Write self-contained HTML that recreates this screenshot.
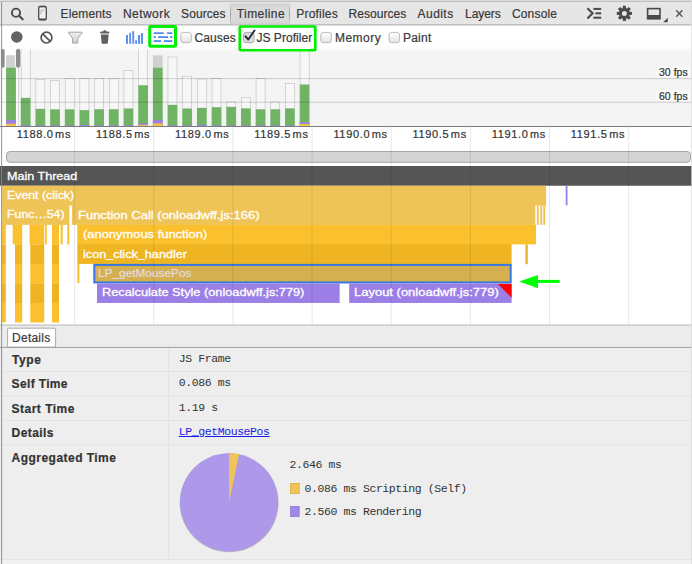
<!DOCTYPE html>
<html><head><meta charset="utf-8"><title>DevTools Timeline</title>
<style>
html,body{margin:0;padding:0;}
body{width:692px;height:564px;position:relative;overflow:hidden;background:#fff;font-family:'Liberation Sans', sans-serif;}
.t{position:absolute;white-space:pre;line-height:1;}
.b{position:absolute;}
svg{position:absolute;left:0;top:0;}
</style></head><body>
<svg width="692" height="564" viewBox="0 0 692 564">
<rect x="0.00" y="0.00" width="692.00" height="1.30" fill="#dadada" />
<rect x="0.00" y="1.30" width="692.00" height="0.80" fill="#a6a6a6" />
<rect x="0.00" y="2.10" width="692.00" height="22.20" fill="#e6e6e6" />
<rect x="0.00" y="24.30" width="692.00" height="1.10" fill="#a9a9a9" />
<defs><linearGradient id="tabg" x1="0" y1="0" x2="0" y2="1"><stop offset="0" stop-color="#d0d0d0"/><stop offset="0.2" stop-color="#dadada"/><stop offset="0.8" stop-color="#dadada"/><stop offset="1" stop-color="#d2d2d2"/></linearGradient><linearGradient id="tabb" x1="0" y1="0" x2="0" y2="1"><stop offset="0" stop-color="#a0a0a0" stop-opacity="0.1"/><stop offset="0.5" stop-color="#9a9a9a"/><stop offset="1" stop-color="#a0a0a0" stop-opacity="0.1"/></linearGradient><linearGradient id="ovg" x1="0" y1="0" x2="0" y2="1"><stop offset="0" stop-color="#ffffff"/><stop offset="1" stop-color="#f4f4f4"/></linearGradient></defs>
<rect x="230.30" y="3.50" width="59.30" height="20.80" fill="url(#tabg)" />
<rect x="230.00" y="3.50" width="1.00" height="20.80" fill="url(#tabb)" />
<rect x="289.00" y="3.50" width="1.00" height="20.80" fill="url(#tabb)" />
<rect x="0.00" y="49.00" width="692.00" height="77.00" fill="#f4f4f4" />
<rect x="0.00" y="46.00" width="692.00" height="6.00" fill="url(#ovg)" />
<rect x="2.00" y="46.00" width="16.50" height="80.00" fill="#ffffff" />
<clipPath id="ovc"><rect x="0" y="49" width="692" height="77"/></clipPath><g clip-path="url(#ovc)">
<rect x="6.10" y="55.30" width="9.80" height="12.30" fill="#d0d0d0" />
<rect x="6.10" y="67.60" width="9.80" height="58.40" fill="#70b365" />
<rect x="6.10" y="120.20" width="9.80" height="5.80" fill="#9b7fe6" />
<rect x="6.10" y="123.70" width="9.80" height="2.30" fill="#f3c144" />
<rect x="21.18" y="44.00" width="9.00" height="54.00" fill="#ffffff" fill-opacity="0.28" stroke="#b4b4b4" stroke-width="0.5"/>
<rect x="20.78" y="98.00" width="9.80" height="28.00" fill="#70b365" />
<rect x="20.78" y="125.20" width="9.80" height="0.80" fill="#9b7fe6" />
<rect x="35.86" y="79.30" width="9.00" height="29.70" fill="#ffffff" fill-opacity="0.28" stroke="#b4b4b4" stroke-width="0.5"/>
<rect x="35.46" y="109.00" width="9.80" height="17.00" fill="#70b365" />
<rect x="35.46" y="125.40" width="9.80" height="0.60" fill="#9b7fe6" />
<rect x="50.54" y="80.70" width="9.00" height="28.80" fill="#ffffff" fill-opacity="0.28" stroke="#b4b4b4" stroke-width="0.5"/>
<rect x="50.14" y="109.50" width="9.80" height="16.50" fill="#70b365" />
<rect x="50.14" y="125.40" width="9.80" height="0.60" fill="#9b7fe6" />
<rect x="65.22" y="78.30" width="9.00" height="31.20" fill="#ffffff" fill-opacity="0.28" stroke="#b4b4b4" stroke-width="0.5"/>
<rect x="64.82" y="109.50" width="9.80" height="16.50" fill="#70b365" />
<rect x="64.82" y="125.40" width="9.80" height="0.60" fill="#9b7fe6" />
<rect x="79.90" y="78.30" width="9.00" height="31.90" fill="#ffffff" fill-opacity="0.28" stroke="#b4b4b4" stroke-width="0.5"/>
<rect x="79.50" y="110.20" width="9.80" height="15.80" fill="#70b365" />
<rect x="79.50" y="125.00" width="9.80" height="1.00" fill="#9b7fe6" />
<rect x="94.58" y="78.30" width="9.00" height="31.00" fill="#ffffff" fill-opacity="0.28" stroke="#b4b4b4" stroke-width="0.5"/>
<rect x="94.18" y="109.30" width="9.80" height="16.70" fill="#70b365" />
<rect x="94.18" y="125.40" width="9.80" height="0.60" fill="#9b7fe6" />
<rect x="109.26" y="78.30" width="9.00" height="31.00" fill="#ffffff" fill-opacity="0.28" stroke="#b4b4b4" stroke-width="0.5"/>
<rect x="108.86" y="109.30" width="9.80" height="16.70" fill="#70b365" />
<rect x="108.86" y="125.40" width="9.80" height="0.60" fill="#9b7fe6" />
<rect x="123.94" y="70.60" width="9.00" height="38.10" fill="#ffffff" fill-opacity="0.28" stroke="#b4b4b4" stroke-width="0.5"/>
<rect x="123.54" y="108.70" width="9.80" height="17.30" fill="#70b365" />
<rect x="123.54" y="125.40" width="9.80" height="0.60" fill="#9b7fe6" />
<rect x="138.62" y="44.00" width="9.00" height="41.40" fill="#ffffff" fill-opacity="0.28" stroke="#b4b4b4" stroke-width="0.5"/>
<rect x="138.22" y="85.40" width="9.80" height="40.60" fill="#70b365" />
<rect x="138.22" y="123.40" width="9.80" height="2.60" fill="#9b7fe6" />
<rect x="138.22" y="124.80" width="9.80" height="1.20" fill="#f3c144" />
<rect x="152.90" y="55.30" width="9.80" height="12.30" fill="#d0d0d0" />
<rect x="152.90" y="67.60" width="9.80" height="58.40" fill="#70b365" />
<rect x="152.90" y="119.80" width="9.80" height="6.20" fill="#9b7fe6" />
<rect x="152.90" y="123.30" width="9.80" height="2.70" fill="#f3c144" />
<rect x="167.98" y="57.00" width="9.00" height="48.00" fill="#ffffff" fill-opacity="0.28" stroke="#b4b4b4" stroke-width="0.5"/>
<rect x="167.58" y="105.00" width="9.80" height="21.00" fill="#70b365" />
<rect x="167.58" y="125.40" width="9.80" height="0.60" fill="#9b7fe6" />
<rect x="182.66" y="76.20" width="9.00" height="32.50" fill="#ffffff" fill-opacity="0.28" stroke="#b4b4b4" stroke-width="0.5"/>
<rect x="182.26" y="108.70" width="9.80" height="17.30" fill="#70b365" />
<rect x="182.26" y="125.40" width="9.80" height="0.60" fill="#9b7fe6" />
<rect x="197.34" y="79.00" width="9.00" height="29.00" fill="#ffffff" fill-opacity="0.28" stroke="#b4b4b4" stroke-width="0.5"/>
<rect x="196.94" y="108.00" width="9.80" height="18.00" fill="#70b365" />
<rect x="196.94" y="124.80" width="9.80" height="1.20" fill="#9b7fe6" />
<rect x="212.02" y="78.40" width="9.00" height="28.90" fill="#ffffff" fill-opacity="0.28" stroke="#b4b4b4" stroke-width="0.5"/>
<rect x="211.62" y="107.30" width="9.80" height="18.70" fill="#70b365" />
<rect x="211.62" y="125.40" width="9.80" height="0.60" fill="#9b7fe6" />
<rect x="226.70" y="102.00" width="9.00" height="5.00" fill="#ffffff" fill-opacity="0.28" stroke="#b4b4b4" stroke-width="0.5"/>
<rect x="226.30" y="107.00" width="9.80" height="19.00" fill="#70b365" />
<rect x="226.30" y="125.40" width="9.80" height="0.60" fill="#9b7fe6" />
<rect x="241.38" y="97.80" width="9.00" height="10.70" fill="#ffffff" fill-opacity="0.28" stroke="#b4b4b4" stroke-width="0.5"/>
<rect x="240.98" y="108.50" width="9.80" height="17.50" fill="#70b365" />
<rect x="240.98" y="125.40" width="9.80" height="0.60" fill="#9b7fe6" />
<rect x="256.06" y="78.40" width="9.00" height="31.00" fill="#ffffff" fill-opacity="0.28" stroke="#b4b4b4" stroke-width="0.5"/>
<rect x="255.66" y="109.40" width="9.80" height="16.60" fill="#70b365" />
<rect x="255.66" y="125.40" width="9.80" height="0.60" fill="#9b7fe6" />
<rect x="270.74" y="102.00" width="9.00" height="7.40" fill="#ffffff" fill-opacity="0.28" stroke="#b4b4b4" stroke-width="0.5"/>
<rect x="270.34" y="109.40" width="9.80" height="16.60" fill="#70b365" />
<rect x="270.34" y="125.40" width="9.80" height="0.60" fill="#9b7fe6" />
<rect x="285.42" y="83.40" width="9.00" height="25.10" fill="#ffffff" fill-opacity="0.28" stroke="#b4b4b4" stroke-width="0.5"/>
<rect x="285.02" y="108.50" width="9.80" height="17.50" fill="#70b365" />
<rect x="285.02" y="125.40" width="9.80" height="0.60" fill="#9b7fe6" />
<rect x="300.10" y="44.00" width="9.00" height="40.80" fill="#ffffff" fill-opacity="0.28" stroke="#b4b4b4" stroke-width="0.5"/>
<rect x="299.70" y="84.00" width="9.80" height="0.80" fill="#d0d0d0" />
<rect x="299.70" y="84.80" width="9.80" height="41.20" fill="#70b365" />
<rect x="299.70" y="122.40" width="9.80" height="3.60" fill="#9b7fe6" />
<rect x="299.70" y="124.00" width="9.80" height="2.00" fill="#f3c144" />
</g>
<rect x="2.00" y="78.10" width="690.00" height="1.00" fill="#000" fill-opacity="0.17"/>
<rect x="2.00" y="101.70" width="690.00" height="1.00" fill="#000" fill-opacity="0.17"/>
<rect x="655.50" y="66.50" width="34.50" height="11.20" fill="#fff" fill-opacity="0.55"/>
<rect x="655.50" y="90.50" width="34.50" height="10.80" fill="#fff" fill-opacity="0.55"/>
<rect x="1.2" y="48.9" width="3.4" height="18.8" rx="1.6" fill="#8c8c8c"/>
<rect x="15.4" y="48.4" width="5.6" height="19.8" rx="2.7" fill="#8c8c8c" stroke="#fff" stroke-width="1.0"/>
<rect x="17.90" y="67.00" width="0.80" height="59.00" fill="#c8c8c8" />
<rect x="0.00" y="126.00" width="692.00" height="1.00" fill="#7d7d7d" />
<rect x="6.5" y="151.5" width="684" height="10.8" rx="3.6" fill="#d4d4d4" stroke="#a6a6a6" stroke-width="1"/>
<rect x="0.00" y="166.00" width="692.00" height="19.75" fill="#555555" />
<rect x="2.10" y="204.80" width="67.20" height="1.30" fill="#efc457" />
<rect x="72.00" y="204.80" width="463.30" height="1.30" fill="#efc457" />
<rect x="77.30" y="224.35" width="458.00" height="1.30" fill="#efc457" />
<rect x="77.30" y="243.90" width="434.30" height="1.30" fill="#fbc02d" />
<rect x="94.00" y="263.40" width="417.60" height="1.30" fill="#eeb422" />
<rect x="2.10" y="224.35" width="3.70" height="1.30" fill="#efc457" />
<rect x="12.70" y="224.35" width="9.50" height="1.30" fill="#efc457" />
<rect x="29.50" y="224.35" width="14.70" height="1.30" fill="#efc457" />
<rect x="45.10" y="224.35" width="1.70" height="1.30" fill="#efc457" />
<rect x="52.00" y="224.35" width="7.00" height="1.30" fill="#efc457" />
<rect x="60.60" y="224.35" width="2.10" height="1.30" fill="#efc457" />
<rect x="67.30" y="224.35" width="2.00" height="1.30" fill="#efc457" />
<rect x="2.10" y="185.75" width="544.00" height="19.75" fill="#efc457" />
<rect x="2.10" y="205.30" width="67.20" height="19.55" fill="#efc457" />
<rect x="72.00" y="205.30" width="463.30" height="19.55" fill="#efc457" />
<rect x="536.90" y="205.30" width="1.80" height="19.55" fill="#efc457" />
<rect x="540.30" y="205.30" width="1.90" height="19.55" fill="#efc457" />
<rect x="543.30" y="205.30" width="1.90" height="19.55" fill="#efc457" />
<rect x="2.10" y="224.85" width="3.70" height="19.55" fill="#fbc02d" />
<rect x="12.70" y="224.85" width="9.50" height="19.55" fill="#fbc02d" />
<rect x="29.50" y="224.85" width="14.70" height="19.55" fill="#fbc02d" />
<rect x="45.10" y="224.85" width="1.70" height="19.55" fill="#fbc02d" />
<rect x="52.00" y="224.85" width="7.00" height="19.55" fill="#fbc02d" />
<rect x="60.60" y="224.85" width="2.10" height="19.55" fill="#fbc02d" />
<rect x="67.30" y="224.85" width="2.00" height="19.55" fill="#fbc02d" />
<rect x="77.30" y="224.85" width="458.70" height="19.55" fill="#fbc02d" />
<rect x="2.10" y="244.40" width="3.70" height="19.70" fill="#eeb422" />
<rect x="15.00" y="244.40" width="7.20" height="19.70" fill="#eeb422" />
<rect x="30.30" y="244.40" width="13.90" height="19.70" fill="#eeb422" />
<rect x="52.00" y="244.40" width="7.00" height="19.70" fill="#eeb422" />
<rect x="2.10" y="263.90" width="3.70" height="19.75" fill="#fbc02d" />
<rect x="15.00" y="263.90" width="7.20" height="19.75" fill="#fbc02d" />
<rect x="30.30" y="263.90" width="13.90" height="19.75" fill="#fbc02d" />
<rect x="52.00" y="263.90" width="7.00" height="19.75" fill="#fbc02d" />
<rect x="2.10" y="283.45" width="3.70" height="19.75" fill="#eeb422" />
<rect x="15.00" y="283.45" width="7.20" height="19.75" fill="#eeb422" />
<rect x="30.30" y="283.45" width="13.90" height="19.75" fill="#eeb422" />
<rect x="52.00" y="283.45" width="7.00" height="19.75" fill="#eeb422" />
<rect x="2.10" y="303.00" width="3.70" height="19.45" fill="#fbc02d" />
<rect x="15.00" y="303.00" width="7.20" height="19.45" fill="#fbc02d" />
<rect x="30.30" y="303.00" width="13.90" height="19.45" fill="#fbc02d" />
<rect x="52.00" y="303.00" width="7.00" height="19.45" fill="#fbc02d" />
<rect x="77.30" y="244.40" width="434.30" height="19.50" fill="#eeb422" />
<rect x="525.40" y="244.40" width="2.40" height="19.80" fill="#ecb030" />
<rect x="77.30" y="263.90" width="2.10" height="19.15" fill="#fbc02d" />
<rect x="94.3" y="264.9" width="416.40" height="17.55" fill="#d4b050" stroke="#3478e0" stroke-width="2"/>
<rect x="97.00" y="283.45" width="242.65" height="19.50" fill="#9b7fe6" />
<rect x="349.20" y="283.45" width="162.40" height="19.50" fill="#9b7fe6" />
<polygon points="497.9,283.9 511.6,283.9 511.6,297.7" fill="#ff0000"/>
<rect x="565.70" y="185.75" width="1.80" height="19.55" fill="#9b7fe6" />
<rect x="0.00" y="324.60" width="692.00" height="1.10" fill="#adadad" />
<rect x="0.00" y="325.70" width="692.00" height="21.30" fill="#ececec" />
<rect x="0.00" y="347.90" width="692.00" height="216.10" fill="#eeeeee" />
<rect x="0.00" y="560.00" width="692.00" height="4.00" fill="#f1f1f1" />
<path d="M7.6,347.2 L7.6,329.1 Q7.6,328.2 8.5,328.2 L54.7,328.2 Q55.6,328.2 55.6,329.1 L55.6,347.2 Z" fill="#ffffff" stroke="#a2a2a2" stroke-width="0.9"/>
<rect x="0.00" y="346.90" width="692.00" height="1.00" fill="#9c9c9c" />
<rect x="2.00" y="371.20" width="690.00" height="0.80" fill="#e0e0e0" />
<rect x="2.00" y="395.80" width="690.00" height="0.80" fill="#e0e0e0" />
<rect x="2.00" y="420.20" width="690.00" height="0.80" fill="#e0e0e0" />
<rect x="2.00" y="444.60" width="690.00" height="0.80" fill="#e0e0e0" />
<rect x="2.00" y="559.20" width="690.00" height="0.80" fill="#e0e0e0" />
<rect x="168.40" y="348.00" width="0.80" height="211.00" fill="#e0e0e0" />
<circle cx="229.1" cy="502.90000000000003" r="49.4" fill="#bdbdbd"/>
<circle cx="229.1" cy="502.3" r="49.1" fill="#ad98ea"/>
<path d="M229.1,502.3 L229.1,453.20000000000005 A49.1,49.1 0 0 1 239.12,453.93 Z" fill="#f0c457"/>
<rect x="290.6" y="483.4" width="8.6" height="10.2" fill="#f0c457" stroke="#d9a93a" stroke-width="0.8"/>
<rect x="290.6" y="506.4" width="8.6" height="10.2" fill="#a088e8" stroke="#8f78d8" stroke-width="0.8"/>
<rect x="74.10" y="127.00" width="1.00" height="197.20" fill="#000000" fill-opacity="0.095"/>
<rect x="153.25" y="127.00" width="1.00" height="197.20" fill="#000000" fill-opacity="0.095"/>
<rect x="232.40" y="127.00" width="1.00" height="197.20" fill="#000000" fill-opacity="0.095"/>
<rect x="311.55" y="127.00" width="1.00" height="197.20" fill="#000000" fill-opacity="0.095"/>
<rect x="390.70" y="127.00" width="1.00" height="197.20" fill="#000000" fill-opacity="0.095"/>
<rect x="469.85" y="127.00" width="1.00" height="197.20" fill="#000000" fill-opacity="0.095"/>
<rect x="549.00" y="127.00" width="1.00" height="197.20" fill="#000000" fill-opacity="0.095"/>
<rect x="628.15" y="127.00" width="1.00" height="197.20" fill="#000000" fill-opacity="0.095"/>
<rect x="691.00" y="0.00" width="1.00" height="564.00" fill="#dcdcdc" fill-opacity="0.7"/>
<rect x="1.20" y="2.00" width="0.90" height="562.00" fill="#858585" />
</svg>
<div class="t" style="left:60.60px;top:7.84px;font-size:12px;color:#383838;font-family:'Liberation Sans', sans-serif;letter-spacing:0.134px;-webkit-text-stroke:0.2px #383838;">Elements</div>
<div class="t" style="left:122.90px;top:7.84px;font-size:12px;color:#383838;font-family:'Liberation Sans', sans-serif;letter-spacing:0.469px;-webkit-text-stroke:0.2px #383838;">Network</div>
<div class="t" style="left:181.10px;top:7.84px;font-size:12px;color:#383838;font-family:'Liberation Sans', sans-serif;letter-spacing:0.067px;-webkit-text-stroke:0.2px #383838;">Sources</div>
<div class="t" style="left:236.80px;top:7.84px;font-size:12px;color:#383838;font-family:'Liberation Sans', sans-serif;letter-spacing:0.412px;-webkit-text-stroke:0.2px #383838;">Timeline</div>
<div class="t" style="left:296.20px;top:7.84px;font-size:12px;color:#383838;font-family:'Liberation Sans', sans-serif;letter-spacing:0.223px;-webkit-text-stroke:0.2px #383838;">Profiles</div>
<div class="t" style="left:348.60px;top:7.84px;font-size:12px;color:#383838;font-family:'Liberation Sans', sans-serif;letter-spacing:0.038px;-webkit-text-stroke:0.2px #383838;">Resources</div>
<div class="t" style="left:417.60px;top:7.84px;font-size:12px;color:#383838;font-family:'Liberation Sans', sans-serif;letter-spacing:0.440px;-webkit-text-stroke:0.2px #383838;">Audits</div>
<div class="t" style="left:465.10px;top:7.84px;font-size:12px;color:#383838;font-family:'Liberation Sans', sans-serif;letter-spacing:-0.089px;-webkit-text-stroke:0.2px #383838;">Layers</div>
<div class="t" style="left:511.90px;top:7.84px;font-size:12px;color:#383838;font-family:'Liberation Sans', sans-serif;letter-spacing:0.181px;-webkit-text-stroke:0.2px #383838;">Console</div>
<div class="t" style="left:194.40px;top:31.84px;font-size:12px;color:#383838;font-family:'Liberation Sans', sans-serif;letter-spacing:0.135px;-webkit-text-stroke:0.2px #383838;">Causes</div>
<div class="t" style="left:256.40px;top:31.84px;font-size:12px;color:#383838;font-family:'Liberation Sans', sans-serif;letter-spacing:0.040px;-webkit-text-stroke:0.2px #383838;">JS Profiler</div>
<div class="t" style="left:334.90px;top:31.84px;font-size:12px;color:#383838;font-family:'Liberation Sans', sans-serif;letter-spacing:0.493px;-webkit-text-stroke:0.2px #383838;">Memory</div>
<div class="t" style="left:402.90px;top:31.84px;font-size:12px;color:#383838;font-family:'Liberation Sans', sans-serif;letter-spacing:0.248px;-webkit-text-stroke:0.2px #383838;">Paint</div>
<div class="t" style="left:658.90px;top:67.31px;font-size:10.5px;color:#333;font-family:'Liberation Sans', sans-serif;letter-spacing:0.048px;-webkit-text-stroke:0.2px #333;">30 fps</div>
<div class="t" style="left:658.90px;top:91.31px;font-size:10.5px;color:#333;font-family:'Liberation Sans', sans-serif;letter-spacing:0.048px;-webkit-text-stroke:0.2px #333;">60 fps</div>
<div class="t" style="left:16.80px;top:129.49px;font-size:11px;color:#333;font-family:'Liberation Sans', sans-serif;letter-spacing:0.660px;-webkit-text-stroke:0.2px #333;word-spacing:-2.2px;">1188.0 ms</div>
<div class="t" style="left:95.95px;top:129.49px;font-size:11px;color:#333;font-family:'Liberation Sans', sans-serif;letter-spacing:0.660px;-webkit-text-stroke:0.2px #333;word-spacing:-2.2px;">1188.5 ms</div>
<div class="t" style="left:175.10px;top:129.49px;font-size:11px;color:#333;font-family:'Liberation Sans', sans-serif;letter-spacing:0.660px;-webkit-text-stroke:0.2px #333;word-spacing:-2.2px;">1189.0 ms</div>
<div class="t" style="left:254.25px;top:129.49px;font-size:11px;color:#333;font-family:'Liberation Sans', sans-serif;letter-spacing:0.660px;-webkit-text-stroke:0.2px #333;word-spacing:-2.2px;">1189.5 ms</div>
<div class="t" style="left:333.40px;top:129.49px;font-size:11px;color:#333;font-family:'Liberation Sans', sans-serif;letter-spacing:0.660px;-webkit-text-stroke:0.2px #333;word-spacing:-2.2px;">1190.0 ms</div>
<div class="t" style="left:412.55px;top:129.49px;font-size:11px;color:#333;font-family:'Liberation Sans', sans-serif;letter-spacing:0.660px;-webkit-text-stroke:0.2px #333;word-spacing:-2.2px;">1190.5 ms</div>
<div class="t" style="left:491.70px;top:129.49px;font-size:11px;color:#333;font-family:'Liberation Sans', sans-serif;letter-spacing:0.660px;-webkit-text-stroke:0.2px #333;word-spacing:-2.2px;">1191.0 ms</div>
<div class="t" style="left:570.85px;top:129.49px;font-size:11px;color:#333;font-family:'Liberation Sans', sans-serif;letter-spacing:0.660px;-webkit-text-stroke:0.2px #333;word-spacing:-2.2px;">1191.5 ms</div>
<div class="t" style="left:7.10px;top:170.69px;font-size:11px;color:#fff;font-family:'Liberation Sans', sans-serif;-webkit-text-stroke:0.3px #fff;transform:scaleX(1.1419);transform-origin:0 50%;">Main Thread</div>
<div class="t" style="left:7.30px;top:189.69px;font-size:11px;color:#fff;font-family:'Liberation Sans', sans-serif;-webkit-text-stroke:0.3px #fff;transform:scaleX(1.1201);transform-origin:0 50%;">Event (click)</div>
<div class="t" style="left:7.30px;top:209.29px;font-size:11px;color:#fff;font-family:'Liberation Sans', sans-serif;-webkit-text-stroke:0.3px #fff;transform:scaleX(1.1215);transform-origin:0 50%;">Func…54)</div>
<div class="t" style="left:77.50px;top:209.69px;font-size:11px;color:#fff;font-family:'Liberation Sans', sans-serif;-webkit-text-stroke:0.3px #fff;transform:scaleX(1.1794);transform-origin:0 50%;">Function Call (onloadwff.js:166)</div>
<div class="t" style="left:82.70px;top:229.09px;font-size:11px;color:#fff;font-family:'Liberation Sans', sans-serif;-webkit-text-stroke:0.3px #fff;transform:scaleX(1.1741);transform-origin:0 50%;">(anonymous function)</div>
<div class="t" style="left:82.70px;top:248.59px;font-size:11px;color:#fff;font-family:'Liberation Sans', sans-serif;-webkit-text-stroke:0.3px #fff;transform:scaleX(1.1492);transform-origin:0 50%;">icon_click_handler</div>
<div class="t" style="left:98.00px;top:268.09px;font-size:11px;color:#e3dee6;font-family:'Liberation Sans', sans-serif;-webkit-text-stroke:0.15px #e3dee6;transform:scaleX(1.0755);transform-origin:0 50%;">LP_getMousePos</div>
<div class="t" style="left:102.10px;top:287.49px;font-size:11px;color:#fff;font-family:'Liberation Sans', sans-serif;-webkit-text-stroke:0.3px #fff;transform:scaleX(1.1582);transform-origin:0 50%;">Recalculate Style (onloadwff.js:779)</div>
<div class="t" style="left:354.10px;top:287.49px;font-size:11px;color:#fff;font-family:'Liberation Sans', sans-serif;-webkit-text-stroke:0.3px #fff;transform:scaleX(1.1799);transform-origin:0 50%;">Layout (onloadwff.js:779)</div>
<div class="t" style="left:12.10px;top:331.84px;font-size:12px;color:#3a3a3a;font-family:'Liberation Sans', sans-serif;letter-spacing:0.230px;-webkit-text-stroke:0.2px #3a3a3a;">Details</div>
<div class="t" style="left:12.10px;top:353.74px;font-size:12px;color:#333;font-family:'Liberation Sans', sans-serif;font-weight:700;letter-spacing:0.544px;-webkit-text-stroke:0.2px #333;">Type</div>
<div class="t" style="left:11.60px;top:378.24px;font-size:12px;color:#333;font-family:'Liberation Sans', sans-serif;font-weight:700;letter-spacing:0.351px;-webkit-text-stroke:0.2px #333;">Self Time</div>
<div class="t" style="left:11.60px;top:402.74px;font-size:12px;color:#333;font-family:'Liberation Sans', sans-serif;font-weight:700;letter-spacing:0.483px;-webkit-text-stroke:0.2px #333;">Start Time</div>
<div class="t" style="left:11.60px;top:427.24px;font-size:12px;color:#333;font-family:'Liberation Sans', sans-serif;font-weight:700;letter-spacing:0.420px;-webkit-text-stroke:0.2px #333;">Details</div>
<div class="t" style="left:11.60px;top:451.74px;font-size:12px;color:#333;font-family:'Liberation Sans', sans-serif;font-weight:700;letter-spacing:0.466px;-webkit-text-stroke:0.2px #333;">Aggregated Time</div>
<div class="t" style="left:178.80px;top:352.79px;font-size:11.5px;color:#333;font-family:'Liberation Mono', monospace;letter-spacing:-0.420px;">JS Frame</div>
<div class="t" style="left:178.80px;top:377.29px;font-size:11.5px;color:#333;font-family:'Liberation Mono', monospace;letter-spacing:-0.420px;">0.086 ms</div>
<div class="t" style="left:178.80px;top:401.79px;font-size:11.5px;color:#333;font-family:'Liberation Mono', monospace;letter-spacing:-0.420px;">1.19 s</div>
<div class="t" style="left:178.80px;top:426.29px;font-size:11.5px;color:#1a1ae6;font-family:'Liberation Mono', monospace;letter-spacing:-0.420px;text-decoration:underline;">LP_getMousePos</div>
<div class="t" style="left:289.60px;top:458.59px;font-size:11.5px;color:#333;font-family:'Liberation Mono', monospace;letter-spacing:-0.420px;">2.646 ms</div>
<div class="t" style="left:304.60px;top:482.59px;font-size:11.5px;color:#333;font-family:'Liberation Mono', monospace;letter-spacing:-0.420px;">0.086 ms Scripting (Self)</div>
<div class="t" style="left:304.60px;top:505.59px;font-size:11.5px;color:#333;font-family:'Liberation Mono', monospace;letter-spacing:-0.420px;">2.560 ms Rendering</div>
<svg width="692" height="564" viewBox="0 0 692 564">
<circle cx="16.0" cy="12.75" r="4.1" fill="none" stroke="#4a4a4a" stroke-width="1.9"/>
<path d="M19.0,15.7 L22.7,19.3" stroke="#4a4a4a" stroke-width="2.1" stroke-linecap="round"/>
<rect x="38.7" y="6.3" width="7.6" height="13.5" rx="1.4" fill="#f0f0f0" stroke="#4a4a4a" stroke-width="1.3"/>
<rect x="39.00" y="5.90" width="7.00" height="1.50" fill="#4a4a4a" /><rect x="39.00" y="18.50" width="7.00" height="1.70" fill="#4a4a4a" />
<path d="M39.9,14.4 L43.9,9.0 M40.3,11.6 L41.8,9.4" stroke="#777" stroke-width="0.55"/>
<path d="M587.4,8.2 L592.6,13.3 L587.4,18.4" fill="none" stroke="#4a4a4a" stroke-width="2.1"/>
<rect x="593.40" y="7.90" width="7.80" height="2.00" fill="#4a4a4a" />
<rect x="595.40" y="12.30" width="5.80" height="2.00" fill="#4a4a4a" />
<rect x="593.40" y="16.70" width="7.80" height="2.00" fill="#4a4a4a" />
<polygon points="622.77,8.15 622.93,5.74 625.87,5.74 626.03,8.15 626.97,8.54 628.77,6.94 630.86,9.03 629.26,10.83 629.65,11.77 632.06,11.93 632.06,14.87 629.65,15.03 629.26,15.97 630.86,17.77 628.77,19.86 626.97,18.26 626.03,18.65 625.87,21.06 622.93,21.06 622.77,18.65 621.83,18.26 620.03,19.86 617.94,17.77 619.54,15.97 619.15,15.03 616.74,14.87 616.74,11.93 619.15,11.77 619.54,10.83 617.94,9.03 620.03,6.94 621.83,8.54" fill="#4a4a4a"/>
<circle cx="624.4" cy="13.4" r="2.5" fill="#e6e6e6"/>
<rect x="647.6" y="8.6" width="12.4" height="10.2" fill="#e6e6e6" stroke="#4a4a4a" stroke-width="1.6"/>
<rect x="647.60" y="15.00" width="12.40" height="3.80" fill="#4a4a4a" />
<polygon points="667.7,17.8 667.7,22.3 663.2,22.3" fill="#4a4a4a"/>
<path d="M676.2,10.3 L682.4,16.7 M682.4,10.3 L676.2,16.7" stroke="#5a5a5a" stroke-width="1.5"/>
<circle cx="16.8" cy="37.0" r="5.8" fill="#636363"/>
<circle cx="46.5" cy="37.6" r="5.4" fill="none" stroke="#555" stroke-width="1.7"/>
<path d="M42.7,33.9 L50.3,41.3" stroke="#555" stroke-width="1.7"/>
<defs><linearGradient id="fng" x1="0" y1="0" x2="0" y2="1"><stop offset="0" stop-color="#eeeeee"/><stop offset="1" stop-color="#d0d0d0"/></linearGradient></defs>
<path d="M68.7,32.2 L82.0,32.2 L82.0,33.4 Q79.3,35.6 77.8,38.8 L77.8,43.1 L72.6,43.1 L72.6,38.8 Q71.2,35.6 68.7,33.4 Z" fill="url(#fng)" stroke="#a4a4a4" stroke-width="1.0" stroke-linejoin="round"/>
<path d="M100.2,33.4 L100.2,32.2 Q100.2,31.4 101.4,31.4 L103.2,31.4 L103.6,30.3 L105.9,30.3 L106.3,31.4 L108.1,31.4 Q109.3,31.4 109.3,32.2 L109.3,33.4 Z" fill="#606060"/>
<path d="M100.9,34.4 L108.6,34.4 L107.9,43.0 Q107.8,43.8 107.0,43.8 L102.5,43.8 Q101.7,43.8 101.6,43.0 Z" fill="#606060"/>
<rect x="126.00" y="35.00" width="2.00" height="8.80" fill="#5b8ff0" />
<rect x="129.20" y="32.80" width="1.90" height="11.00" fill="#5b8ff0" />
<rect x="132.30" y="31.10" width="1.90" height="12.70" fill="#5b8ff0" />
<rect x="135.20" y="40.20" width="1.80" height="3.60" fill="#5b8ff0" />
<rect x="138.00" y="35.00" width="2.00" height="8.80" fill="#5b8ff0" />
<rect x="140.90" y="33.10" width="2.10" height="10.70" fill="#5b8ff0" />
<rect x="153.70" y="32.30" width="10.10" height="1.70" fill="#4d8af0" />
<rect x="167.00" y="32.30" width="5.30" height="1.70" fill="#4d8af0" />
<rect x="153.70" y="36.20" width="2.20" height="1.80" fill="#4d8af0" />
<rect x="158.20" y="36.20" width="10.00" height="1.80" fill="#4d8af0" />
<rect x="170.10" y="36.20" width="2.20" height="1.80" fill="#4d8af0" />
<rect x="153.70" y="40.20" width="7.30" height="1.80" fill="#4d8af0" />
<rect x="163.90" y="40.20" width="8.40" height="1.80" fill="#4d8af0" />
<rect x="149.7" y="26.5" width="25.8" height="19.7" rx="0.8" fill="none" stroke="#00ee00" stroke-width="3"/>
<rect x="239.7" y="26.5" width="75.6" height="23.8" rx="0.8" fill="none" stroke="#00ee00" stroke-width="2.6"/>
<defs><linearGradient id="cbg" x1="0" y1="0" x2="0" y2="1"><stop offset="0" stop-color="#ffffff"/><stop offset="1" stop-color="#e2e2e2"/></linearGradient></defs>
<rect x="180.8" y="32.4" width="10.5" height="10.3" rx="2.4" fill="url(#cbg)" stroke="#b4b4b4" stroke-width="0.9"/>
<rect x="243.6" y="32.4" width="10.5" height="10.3" rx="2.4" fill="#dcdcdc" stroke="#a4a4a4" stroke-width="0.9"/>
<rect x="320.8" y="32.4" width="10.5" height="10.3" rx="2.4" fill="url(#cbg)" stroke="#b4b4b4" stroke-width="0.9"/>
<rect x="389.0" y="32.4" width="10.5" height="10.3" rx="2.4" fill="url(#cbg)" stroke="#b4b4b4" stroke-width="0.9"/>
<path d="M245.5,36.3 L248.3,39.5 L254.5,30.5" fill="none" stroke="#262a33" stroke-width="1.9" stroke-linejoin="round" stroke-linecap="round"/>
<polygon points="519.1,281.4 538,275.0 538,288.3" fill="#00ff00"/>
<rect x="537.50" y="279.90" width="22.20" height="3.00" fill="#00ff00" />
</svg>
</body></html>
